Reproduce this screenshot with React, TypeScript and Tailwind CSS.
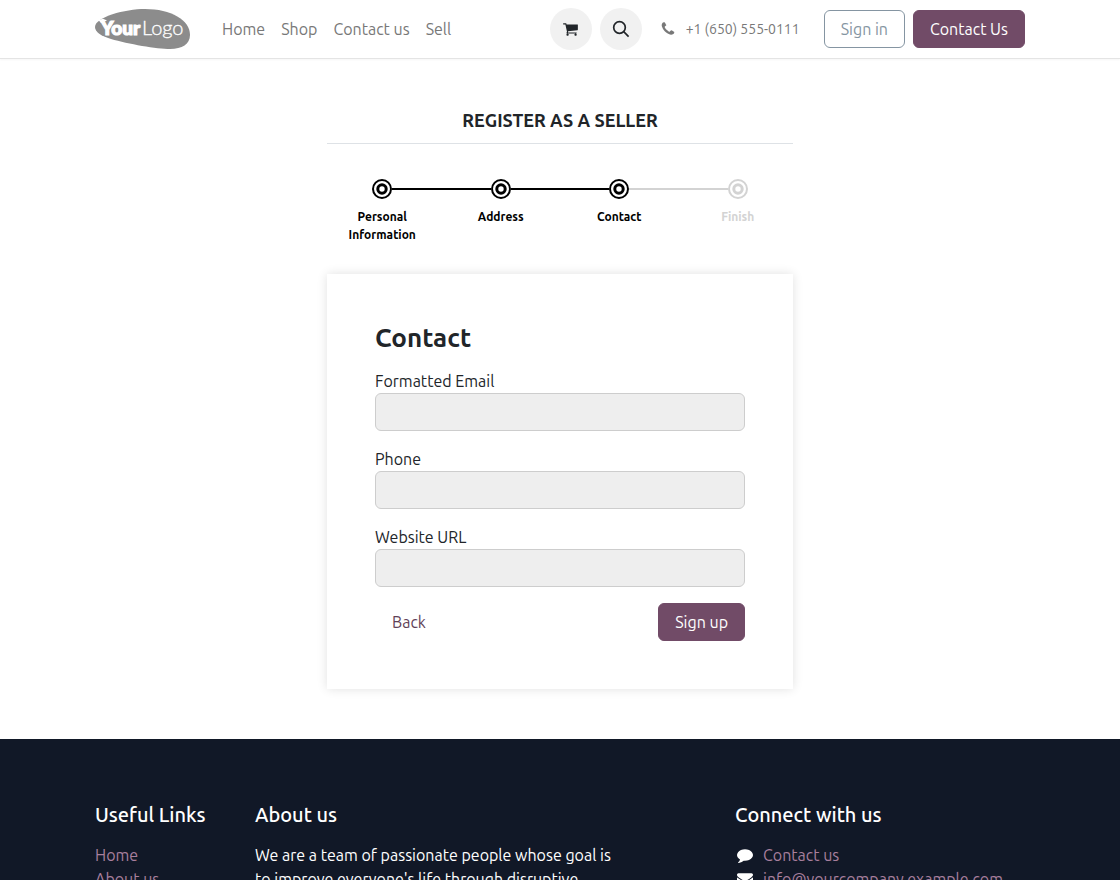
import { useState } from "react";

const navLinks = ["Home", "Shop", "Contact us", "Sell"];

const steps = [
  { label: "Personal Information", done: true },
  { label: "Address", done: true },
  { label: "Contact", done: true },
  { label: "Finish", done: false },
];

const fields = [
  { id: "email", label: "Formatted Email", type: "email" },
  { id: "phone", label: "Phone", type: "tel" },
  { id: "website", label: "Website URL", type: "url" },
];

const icons = {
  cart: "M640 1536q0 52-38 90t-90 38-90-38-38-90 38-90 90-38 90 38 38 90zm896 0q0 52-38 90t-90 38-90-38-38-90 38-90 90-38 90 38 38 90zm128-1088v512q0 24-16.500 42.500t-40.500 21.500l-1044 122q13 60 13 70 0 16-24 64h920q26 0 45 19t19 45-19 45-45 19h-1024q-26 0-45-19t-19-45q0-11 8-31.500t16-36 21.500-40 15.500-29.500l-177-823h-204q-26 0-45-19t-19-45 19-45 45-19h256q16 0 28.500 6.500t19.500 15.500 13 24.500 8 26 5.500 29.500 4.500 26h1201q26 0 45 19t19 45z",
  phone: "M1600 1240q0 27-10 70.500t-21 68.500q-21 50-122 106-94 51-186 51-27 0-53-3.500t-57.500-12.500-47-14.500-55.500-20.500-49-18q-98-35-175-83-127-79-264-216t-216-264q-48-77-83-175-3-9-18-49t-20.500-55.500-14.500-47-12.500-57.500-3.500-53q0-92 51-186 56-101 106-122 25-11 68.500-21t70.500-10q14 0 21 3 18 6 53 76 11 19 30 54t35 63.500 31 53.500q3 4 17.500 25t21.500 35.500 7 28.500q0 20-28.500 50t-62 55-62 53-28.500 46q0 9 5 22.500t8.500 20.500 14 24 11.500 19q76 137 174 235t235 174q2 1 19 11.500t24 14 20.500 8.500 22.500 5q18 0 46-28.500t53-62 55-62 50-28.500q14 0 28.500 7t35.500 21.500 25 17.500q25 15 53.500 31t63.500 35 54 30q70 35 76 53 3 7 3 21z",
  comment: "M1792 896q0 174-120 321.500t-326 233-450 85.500q-70 0-145-8-198 175-460 242-49 14-114 22-17 2-30.500-9t-17.500-29v-1q-3-4-.5-12t2-10 4.500-9.500l6-9 7-8.500 8-9q7-8 31-34.500t34.500-38 31-39.500 32.500-51 27-59 26-76q-157-89-247.500-220t-90.500-281q0-174 120-321.500t326-233 450-85.500 450 85.500 326 233 120 321.500z",
  envelope: "M1792 710v794q0 66-47 113t-113 47h-1472q-66 0-113-47t-47-113v-794q44 49 101 87 362 246 497 345 57 42 92.500 65.500t94.500 48 110 24.500h2q51 0 110-24.500t94.500-48 92.500-65.500q170-123 498-345 57-39 100-87zm0-294q0 79-49 151t-122 123q-376 261-468 325-10 7-42.500 31t-54 38.500-52 32.500-57.500 27-50 9h-2q-23 0-50-9t-57.500-27-52-32.500-54-38.500-42.500-31q-91-64-262-182.500t-205-142.500q-62-42-117-115.500t-55-136.500q0-78 41.500-130t118.500-52h1472q65 0 112.500 47t47.500 113z",
};

function Icon({ name, className }: { name: keyof typeof icons; className?: string }) {
  return (
    <svg viewBox="0 0 1792 1792" fill="currentColor" aria-hidden="true" className={className}>
      <path d={icons[name]} />
    </svg>
  );
}

function Logo() {
  return (
    <svg viewBox="0 0 95 40" className="h-10 w-[95px]" role="img" aria-label="Your Logo">
      <path d="M0 18C0 8 30 0 50 0C76 0 95 11 95 26C95 35 87 40 75 40C62 40 33 35 16 30C6 27 0 23 0 18Z" fill="#8c8c8c" />
      <path d="M3.500 11L8 9.800L12 11.500L6 14Z" fill="#fff" />
      <text x="6" y="26" fill="#fff" stroke="#fff" strokeWidth="1.200" fontFamily="Lato" fontWeight="900" fontSize="19">Your</text>
      <text x="47" y="26" fill="#fff" stroke="#fff" strokeWidth="0.3" fontFamily="Lato" fontWeight="300" fontSize="20">Logo</text>
    </svg>
  );
}

function Header() {
  return (
    <header className="border-b border-[#e4e4e4] bg-white shadow-[0_1px_2px_rgba(0,0,0,0.04)]">
      <div className="mx-auto flex h-[58px] w-full max-w-[960px] items-center px-[15px]">
        <a href="#" className="mr-8 shrink-0">
          <Logo />
        </a>
        <nav className="flex gap-4 whitespace-nowrap text-[#787878]">
          {navLinks.map((link) => (
            <a key={link} href="#">{link}</a>
          ))}
        </nav>
        <div className="ml-auto flex items-center whitespace-nowrap">
          <button aria-label="Cart" className="mr-2 flex size-[42px] items-center justify-center rounded-full bg-[#f1f1f1] text-[#212529]">
            <Icon name="cart" className="size-4" />
          </button>
          <button aria-label="Search" className="flex size-[42px] items-center justify-center rounded-full bg-[#f1f1f1] text-[#212529]">
            <svg viewBox="0 0 18 18" className="size-[18px]" fill="none" stroke="currentColor" strokeWidth="1.700" aria-hidden="true">
              <circle cx="7.500" cy="7.500" r="5.800" />
              <path d="M11.700 11.700L16.600 16.600" />
            </svg>
          </button>
          <a href="#" className="mr-6 ml-[18px] flex items-center gap-[10px] text-sm text-[#787878]">
            <Icon name="phone" className="size-4" />
            +1 (650) 555-0111
          </a>
          <a href="#" className="mr-2 flex h-[38px] items-center rounded-md border border-[#8595a2] px-4 text-[#8595a2]">Sign in</a>
          <a href="#" className="flex h-[38px] items-center rounded-md border border-[#714b67] bg-[#714b67] px-4 text-white">Contact Us</a>
        </div>
      </div>
    </header>
  );
}

function Progress() {
  return (
    <ol className="-mx-1 mt-[35px] grid grid-cols-4">
      {steps.map((step, i) => (
        <li key={step.label} className={step.done ? "text-black" : "text-[#d3d3d3]"}>
          <div className="flex items-center">
            <span className={i === 0 ? "h-[2px] flex-1" : "h-[2px] flex-1 bg-current"} />
            <svg viewBox="0 0 20 20" className="size-5" fill="#fff" stroke="currentColor" aria-hidden="true">
              <circle cx="10" cy="10" r="9" strokeWidth="2" />
              <circle cx="10" cy="10" r="4.200" strokeWidth="3" />
            </svg>
            <span
              className={
                i === steps.length - 1
                  ? "h-[2px] flex-1"
                  : steps[i + 1].done
                    ? "h-[2px] flex-1 bg-black"
                    : "h-[2px] flex-1 bg-[#d3d3d3]"
              }
            />
          </div>
          <p className="mx-auto mt-[9px] w-20 text-center text-xs leading-[18px] font-bold">{step.label}</p>
        </li>
      ))}
    </ol>
  );
}

function ContactForm() {
  const [values, setValues] = useState<Record<string, string>>({});

  return (
    <form className="mt-[30px] bg-white p-12 shadow-[0_0_10px_rgba(0,0,0,0.12)]" onSubmit={(e) => e.preventDefault()}>
      <h2 className="mb-[15px] text-[26px] leading-8 font-bold">Contact</h2>
      {fields.map((field) => (
        <div key={field.id} className="mb-4">
          <label htmlFor={field.id} className="block leading-6">{field.label}</label>
          <input
            id={field.id}
            type={field.type}
            value={values[field.id] ?? ""}
            onChange={(e) => setValues({ ...values, [field.id]: e.target.value })}
            className="block h-[38px] w-full rounded-md border border-[#cdcdcd] bg-[#eeeeee] px-3"
          />
        </div>
      ))}
      <div className="flex items-center justify-between">
        <button type="button" className="h-[38px] rounded-md border border-transparent px-4 text-[#5f3f57]">Back</button>
        <button type="submit" className="h-[38px] rounded-md border border-[#714b67] bg-[#714b67] px-4 text-white">Sign up</button>
      </div>
    </form>
  );
}

function Footer() {
  return (
    <footer className="mt-[50px] bg-[#111827] pt-16 pb-16 text-white">
      <div className="mx-auto grid w-full max-w-[960px] grid-cols-12 gap-x-[30px] px-[15px] leading-6">
        <div className="col-span-2">
          <h5 className="mb-4 text-xl leading-6 font-medium whitespace-nowrap">Useful Links</h5>
          <ul className="text-[#a87f9d]">
            <li><a href="#">Home</a></li>
            <li><a href="#">About us</a></li>
          </ul>
        </div>
        <div className="col-span-5">
          <h5 className="mb-4 text-xl leading-6 font-medium">About us</h5>
          <p>We are a team of passionate people whose goal is to improve everyone's life through disruptive</p>
        </div>
        <div className="col-span-4 col-start-9">
          <h5 className="mb-4 text-xl leading-6 font-medium">Connect with us</h5>
          <ul className="text-[#a87f9d]">
            <li className="flex items-center gap-[10px]">
              <Icon name="comment" className="ml-[2px] size-4 text-white" />
              <a href="#">Contact us</a>
            </li>
            <li className="flex items-center gap-[10px]">
              <Icon name="envelope" className="ml-[2px] size-4 text-white" />
              <a href="#">info@yourcompany.example.com</a>
            </li>
          </ul>
        </div>
      </div>
    </footer>
  );
}

export default function App() {
  return (
    <div className="h-screen overflow-y-auto bg-white font-['Ubuntu','Noto_Sans',sans-serif] text-base text-[#212529] [scrollbar-width:none]">
      <Header />
      <main className="mx-auto w-full max-w-[466px] pt-[49px]">
        <h1 className="border-b border-[#dee2e6] pb-[11px] text-center text-lg leading-6 font-bold">REGISTER AS A SELLER</h1>
        <Progress />
        <ContactForm />
      </main>
      <Footer />
    </div>
  );
}
